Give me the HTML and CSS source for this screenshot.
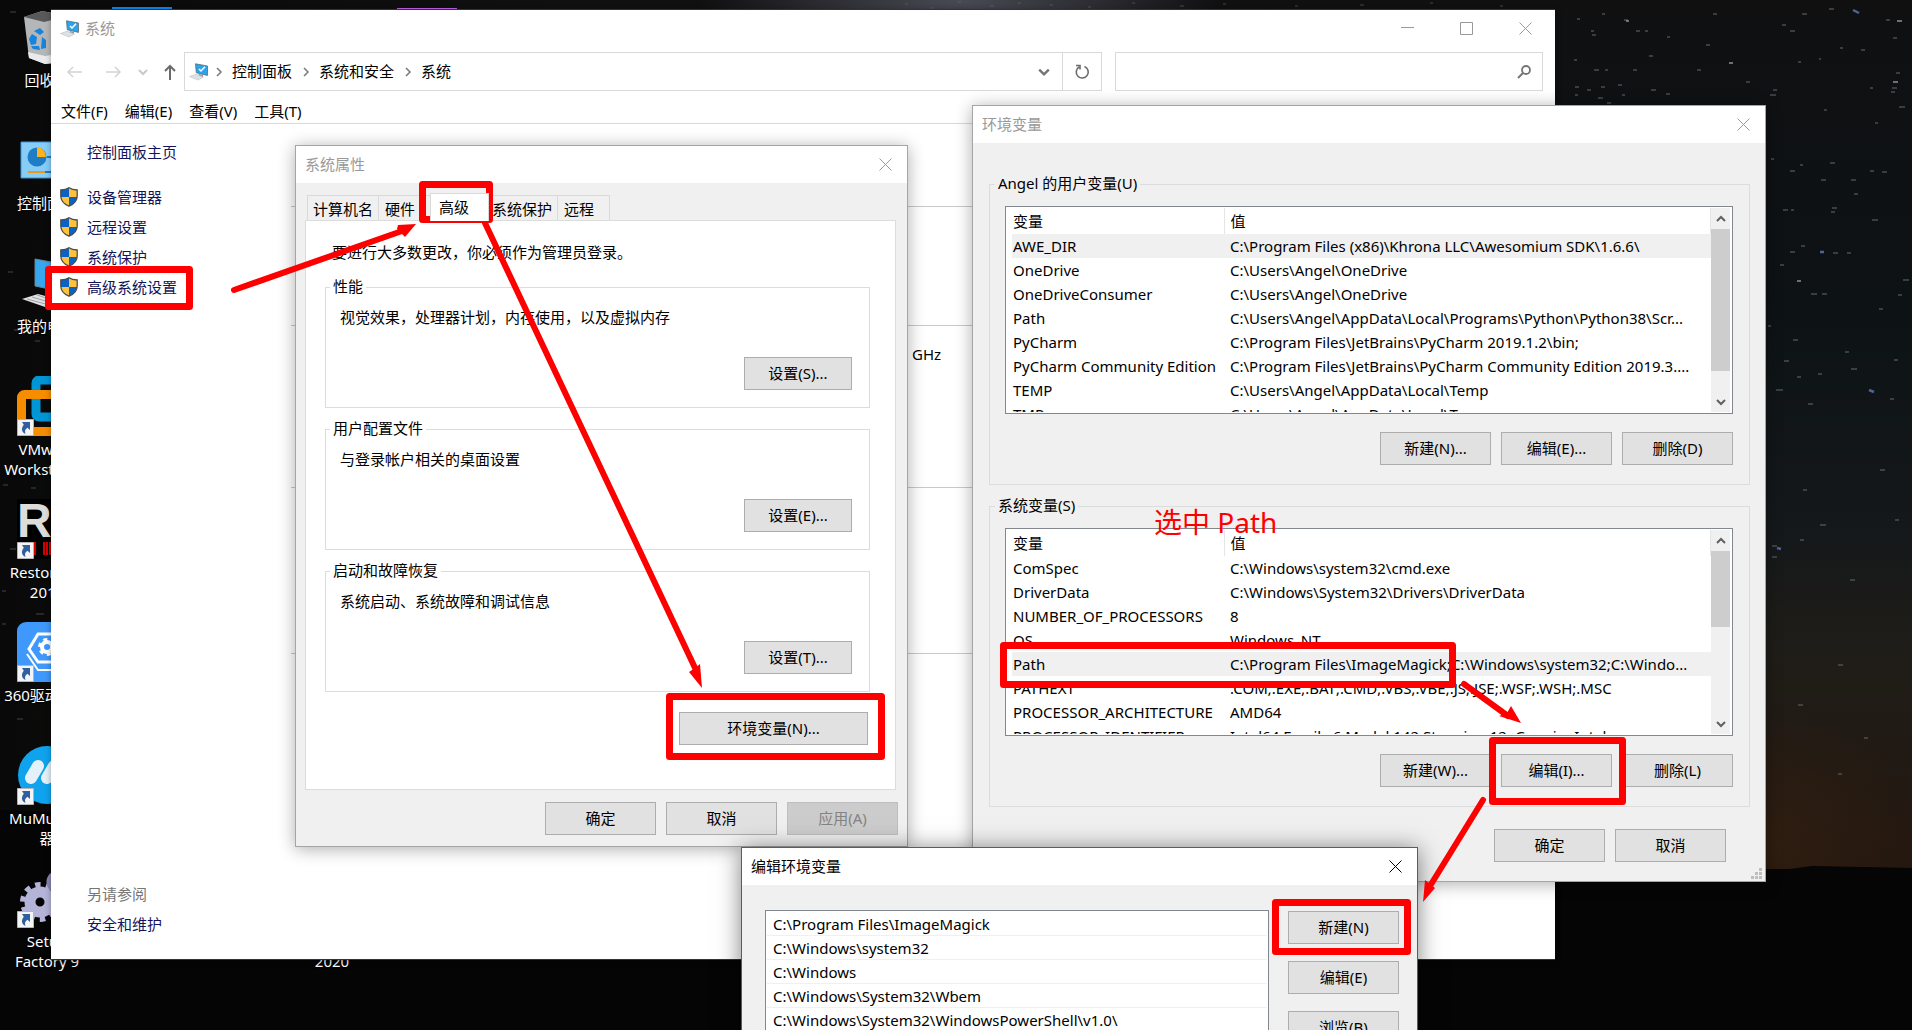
FILE: index.html
```html
<!DOCTYPE html>
<html lang="zh-CN">
<head>
<meta charset="utf-8">
<title>环境变量</title>
<link rel="stylesheet" href="styles.css">
</head>
<body>
<svg class="defs" width="0" height="0" aria-hidden="true">
  <symbol id="shield" viewBox="0 0 18 20">
    <path d="M9 .8C6.500 2.600 3.500 3 .8 3v6c0 5 3 8 8.200 10.200C14.200 17 17.200 14 17.200 9V3C14.500 3 11.500 2.600 9 .8z" fill="#fdc13b"/>
    <path d="M9 .8C6.500 2.600 3.500 3 .8 3v7H9zM9 10h8.100C16.700 14.500 14 17 9 19.200z" fill="#0a63c4"/>
    <path d="M9 .8C6.500 2.600 3.500 3 .8 3v6c0 5 3 8 8.200 10.200C14.200 17 17.200 14 17.200 9V3C14.500 3 11.500 2.600 9 .8z" fill="none" stroke="#4d4d4d" stroke-width="1.300"/>
  </symbol>
  <symbol id="pc" viewBox="0 0 20 18">
    <path d="M6.500.8l12 2.200v9.400L7.300 9.800z" fill="#2ba4ee" stroke="#5b6b76" stroke-width=".8"/>
    <path d="M10 6l2 2 4-4.200" fill="none" stroke="#fff" stroke-width="1.500"/>
    <path d="M10 11l4 1v2l-5-.5z" fill="#8a959c"/>
    <path d="M.5 13.500L7 11.300l7.500 2.700-5.500 3z" fill="#dfe2e4" stroke="#b9bfc3" stroke-width=".6"/>
  </symbol>
  <symbol id="shortcut" viewBox="0 0 17 17">
    <path d="M.5.5h16v16H.5z" fill="#f4f4f4" stroke="#b5b5b5"/>
    <path d="M5 3h8v8l-2.500-2.200C8 10.500 7.500 12 8.500 15 5 13.500 3.500 10 6.800 5.800z" fill="#2f5f9f"/>
  </symbol>
  <symbol id="close" viewBox="0 0 13 13"><path d="M.5.5l12 12M12.500.5l-12 12" fill="none" stroke="currentColor"/></symbol>
  <symbol id="right" viewBox="0 0 8 10"><path d="M2 1l4 4-4 4" fill="none" stroke="currentColor" stroke-width="1.500"/></symbol>
  <symbol id="down" viewBox="0 0 10 8"><path d="M1 2l4 4 4-4" fill="none" stroke="currentColor" stroke-width="2"/></symbol>
  <symbol id="up" viewBox="0 0 10 8"><path d="M1 6l4-4 4 4" fill="none" stroke="currentColor" stroke-width="2"/></symbol>
</svg>

<main class="desktop">
  <svg class="sky" viewBox="0 0 1912 1030" preserveAspectRatio="none" aria-hidden="true">
    <defs>
      <linearGradient id="night" x1="0" y1="0" x2="0" y2="1"><stop offset="0" stop-color="#101011"/><stop offset=".35" stop-color="#0d1215"/><stop offset=".6" stop-color="#14181a"/><stop offset=".75" stop-color="#1f1d18"/><stop offset="1" stop-color="#24170f"/></linearGradient>
      <linearGradient id="shade" x1="0" x2="1"><stop offset="0" stop-color="#090909"/><stop offset=".3" stop-color="#090909" stop-opacity="0"/></linearGradient>
      <radialGradient id="glow"><stop offset="0" stop-color="#3a2210" stop-opacity=".5"/><stop offset="1" stop-color="#3a2210" stop-opacity="0"/></radialGradient>
      <radialGradient id="milky"><stop offset="0" stop-color="#4a4a55"/><stop offset="1" stop-color="#4a4a55" stop-opacity="0"/></radialGradient>
    </defs>
    <path d="M0 0h1912v870H0z" fill="url(#night)"/>
    <path d="M0 0h1912v870H0z" fill="url(#shade)"/>
    <ellipse cx="960" cy="0" rx="260" ry="60" fill="url(#milky)"/>
    <ellipse cx="1770" cy="840" rx="150" ry="130" fill="url(#glow)"/>
    <path d="M0 810l60 2 1700 57 30 0 22-3 50 1 50 1v162H0z" fill="#050505"/>
    <g fill="none" stroke="#646b70" stroke-width="1">
      <path d="M1624 20h4M1577 19h3M1602 14h3M1713 14h4M1636 31h4M1645 31h3M1591 31h3M1592 35h4M1667 37h3M1706 45h4M1574 60h3M1649 56h4M1594 70h5M1633 70h4M1605 70h3M1575 87h4M1587 90h4M1601 87h4M1618 85h4M1651 90h5M1666 94h4M1622 95h3M1598 98h5M1607 103h4M1575 95h3M1697 70h4M1746 82h4M1773 90h4M1770 95h6M1802 14h5M1829 9h5M1782 25h4M1790 31h5M1840 48h3M1886 20h4M1893 38h4M1798 62h3M1819 59h2M1861 50h4M1896 73h4M1892 88h5M1870 88h3M1891 92h4M1899 107h6M1824 110h3M1875 123h3"/>
      <path d="M1771 159h3M1830 163h5M1800 165h3M1790 171h5M1821 180h5M1851 180h5M1882 172h5M1870 171h4M1854 194h4M1783 210h5M1791 210h3M1832 208h5M1831 212h4M1872 220h6M1790 252h5M1801 246h4M1820 252h4M1833 253h5M1847 253h4M1780 265h4M1811 294h6M1822 294h5M1903 280h6M1898 295h4M1879 309h4M1768 326h3M1793 340h5M1784 361h5M1845 352h4M1851 369h6M1797 377h4M1818 374h4M1894 360h4M1776 390h7M1808 404h5M1890 399h4M1772 546h5M1800 540h4M1772 557h5M1820 525h6M1850 580h5M1798 705h5M1838 665h5M1864 738h4M1803 490h4M1880 470h5M1895 520h4M1838 774h4"/>
      <path d="M905 4h3M931 8h3M958 2h3M990 6h4M1018 3h3M1050 5h3M1088 7h3M1132 3h3M1180 6h4M1223 4h3M1295 6h3M1360 5h4M1430 3h3M1500 6h3M10 12h6M22 175h4M8 272h5M14 330h6M35 341h5M3 485h5M31 488h5M10 549h6M2 591h4M36 614h8M2 624h4M17 719h6" opacity=".6"/>
    </g>
    <path d="M1897 21h5M1626 21h3M1729 63h4M1893 82h5M1797 281h4" stroke="#8b9095" stroke-width="1.500"/>
    <path d="M1853 10l6 3M1869 390l5 2M1777 548l4 1M1820 252h4" stroke="#50629c" stroke-width="2.500"/>
  </svg>

  <section class="icons" aria-label="桌面图标">
    <div class="shortcut r1"><svg class="app" viewBox="0 0 60 60"><path d="M7 10L25 4l26 5-5 46-18 2-16-6z" fill="#b4b6b8"/><path d="M7 10L25 4l26 5-24 6z" fill="#57595b"/><path d="M11 45l17 4 18-3-1 9-17 2-16-6z" fill="#e9eaeb"/><path d="M17 24l6-3 4 4-4 3zM12 32l3-5 5 3-1 7-5 1zM25 30l4 3 0 8-5 1zM14 39l8 0 1 4-7-1z" fill="#1684dc"/></svg><span>回收站</span></div>
    <div class="shortcut r2"><svg class="app" viewBox="0 0 60 60"><path d="M4 12h52v36H4z" fill="#86cdf7" stroke="#3a98d8"/><circle cx="20" cy="27" r="9.500" fill="#1e7dc4"/><path d="M20 27V17a10 10 0 0 1 9 10z" fill="#ffb31a"/><path d="M11 42h17" stroke="#e79a1b" stroke-width="2"/><path d="M28 42h20M30 27h10" stroke="#1e7dc4" stroke-width="2"/></svg><span>控制面板</span></div>
    <div class="shortcut r3"><svg class="app" viewBox="0 0 60 60"><path d="M18 6l38 7v28l-38-8z" fill="#36a6ee" stroke="#70808c"/><path d="M5 46l16-5 22 6-12 8z" fill="#dfe2e4"/><path d="M10 46l22 6M15 44l20 6M20 42l18 6" stroke="#9aa1a6"/></svg><span>我的电脑</span></div>
    <div class="shortcut r4"><svg class="app" viewBox="0 0 60 60"><rect x="19" y="4" width="37" height="37" rx="3" fill="none" stroke="#0095d5" stroke-width="9"/><rect x="4.500" y="18.500" width="38" height="37" rx="3" fill="none" stroke="#f68d00" stroke-width="9"/></svg><svg class="badge"><use href="#shortcut"/></svg><span>VMware Workstation</span></div>
    <div class="shortcut r5"><span class="app restorator">Res</span><svg class="bars" viewBox="0 0 60 13"><path d="M0 0h60v13H0z" fill="#000"/><path d="M18 0v13M27 0v13M30 0v13M33 0v13" stroke="#d40000" stroke-width="2"/></svg><svg class="badge"><use href="#shortcut"/></svg><span>Restorator 2018</span></div>
    <div class="shortcut r6"><svg class="app" viewBox="0 0 60 60"><rect width="60" height="60" rx="9" fill="#3f98fb"/><path d="M21 12h20l9 15-9 13H21l-9-13z" fill="none" stroke="#fff" stroke-width="3"/><path d="M10 32l11 16h20" fill="none" stroke="#fff" stroke-width="2"/><circle cx="30" cy="25" r="5" fill="none" stroke="#fff" stroke-width="4"/><circle cx="30" cy="25" r="7.500" fill="none" stroke="#fff" stroke-width="3" stroke-dasharray="4 3.850"/></svg><svg class="badge"><use href="#shortcut"/></svg><span>360驱动大师</span></div>
    <div class="shortcut r7"><svg class="app" viewBox="0 0 60 60"><circle cx="30" cy="30" r="29" fill="#0fa3ee"/><path d="M14 33l7-12M30 33l7-12" stroke="#e4f1f8" stroke-width="12" stroke-linecap="round"/></svg><svg class="badge"><use href="#shortcut"/></svg><span>MuMu模拟器</span></div>
    <div class="shortcut r8"><svg class="app" viewBox="0 0 60 60"><circle cx="23" cy="34" r="10" fill="none" stroke="#b4b3d8" stroke-width="11"/><circle cx="23" cy="34" r="17.500" fill="none" stroke="#b4b3d8" stroke-width="5" stroke-dasharray="5.500 5.500"/><circle cx="41" cy="14" r="8" fill="none" stroke="#8886b4" stroke-width="7"/></svg><svg class="badge"><use href="#shortcut"/></svg><span>Setup Factory 9</span></div>
    <div class="shortcut blue"><span class="app tile"></span></div>
    <div class="shortcut year"><span class="app"></span><span>2020</span></div>
    <div class="shortcut purple"><span class="app tile"></span></div>
  </section>

  <section class="window system">
    <header class="titlebar">
      <svg class="pc"><use href="#pc"/></svg>
      <h1 class="title">系统</h1>
      <div class="controls">
        <button aria-label="最小化"><svg viewBox="0 0 13 13"><path d="M0 5.500h13" stroke="currentColor"/></svg></button>
        <button aria-label="最大化"><svg viewBox="0 0 13 13"><path d="M.5.5h12v12H.5z" fill="none" stroke="currentColor"/></svg></button>
        <button aria-label="关闭"><svg><use href="#close"/></svg></button>
      </div>
    </header>
    <nav class="navbar" aria-label="导航">
      <div class="history">
        <button aria-label="后退" disabled><svg width="16" height="12" viewBox="0 0 16 12"><path d="M15 6H1M6 1L1 6l5 5" fill="none" stroke="#d3d3d3" stroke-width="1.500"/></svg></button>
        <button aria-label="前进" disabled><svg width="16" height="12" viewBox="0 0 16 12"><path d="M0 6h14M9 1l5 5-5 5" fill="none" stroke="#d3d3d3" stroke-width="1.500"/></svg></button>
        <button class="recent" aria-label="最近位置" disabled><svg width="10" height="8"><use href="#down"/></svg></button>
        <button aria-label="上移"><svg width="12" height="16" viewBox="0 0 12 16"><path d="M6 16V2M1 7l5-5 5 5" fill="none" stroke="#6b6b6b" stroke-width="2"/></svg></button>
      </div>
      <div class="address">
        <svg class="pc"><use href="#pc"/></svg>
        <svg class="crumb"><use href="#right"/></svg><a href="#panel">控制面板</a>
        <svg class="crumb"><use href="#right"/></svg><a href="#security">系统和安全</a>
        <svg class="crumb"><use href="#right"/></svg><a href="#system">系统</a>
        <button class="expand" aria-label="展开"><svg width="12" height="10" viewBox="0 0 10 8"><use href="#down"/></svg></button>
        <button class="refresh" aria-label="刷新"><svg width="16" height="16" viewBox="0 0 16 16"><path d="M10.500 2.500A6 6 0 1 1 5 3M2 1.500h4v4" fill="none" stroke="currentColor" stroke-width="1.600"/></svg></button>
      </div>
      <div class="search">
        <input type="text" aria-label="搜索">
        <svg width="14" height="14" viewBox="0 0 14 14"><circle cx="9" cy="5" r="4" fill="none" stroke="#757575" stroke-width="1.800"/><path d="M6 8l-5 5" stroke="#757575" stroke-width="2"/></svg>
      </div>
    </nav>
    <div class="menubar">
      <button>文件(F)</button><button>编辑(E)</button><button>查看(V)</button><button>工具(T)</button>
    </div>
    <div class="content">
      <aside class="sidebar">
        <a class="home" href="#home">控制面板主页</a>
        <a href="#device"><svg><use href="#shield"/></svg>设备管理器</a>
        <a href="#remote"><svg><use href="#shield"/></svg>远程设置</a>
        <a href="#protect"><svg><use href="#shield"/></svg>系统保护</a>
        <a href="#advanced"><svg><use href="#shield"/></svg>高级系统设置</a>
        <p>另请参阅</p>
        <a class="plain" href="#maintenance">安全和维护</a>
      </aside>
      <div class="details">
        <section class="edition"></section>
        <section class="hardware"><span>GHz</span></section>
        <section class="network"></section>
        <section></section>
      </div>
    </div>
  </section>

  <section class="window properties">
    <header class="titlebar"><h2 class="title">系统属性</h2><div class="controls"><button aria-label="关闭"><svg><use href="#close"/></svg></button></div></header>
    <div class="tabs" role="tablist">
      <button role="tab" class="t-name">计算机名</button><button role="tab" class="t-hw">硬件</button><button role="tab" class="t-adv" aria-selected="true">高级</button><button role="tab" class="t-name">系统保护</button><button role="tab" class="t-remote">远程</button>
    </div>
    <div class="panel">
      <p class="note">要进行大多数更改，你必须作为管理员登录。</p>
      <fieldset><legend>性能</legend><p>视觉效果，处理器计划，内存使用，以及虚拟内存</p><button class="btn">设置(S)...</button></fieldset>
      <fieldset><legend>用户配置文件</legend><p>与登录帐户相关的桌面设置</p><button class="btn">设置(E)...</button></fieldset>
      <fieldset><legend>启动和故障恢复</legend><p>系统启动、系统故障和调试信息</p><button class="btn">设置(T)...</button></fieldset>
      <button class="btn wide">环境变量(N)...</button>
    </div>
    <footer class="actions"><button class="btn">确定</button><button class="btn">取消</button><button class="btn" disabled>应用(A)</button></footer>
  </section>

  <section class="window environment">
    <header class="titlebar"><h2 class="title">环境变量</h2><div class="controls"><button aria-label="关闭"><svg><use href="#close"/></svg></button></div></header>
    <fieldset>
      <legend>Angel 的用户变量(U)</legend>
      <div class="listbox">
        <div class="rows">
          <table>
            <thead><tr><th class="name">变量</th><th>值</th></tr></thead>
            <tbody>
              <tr class="selected"><td>AWE_DIR</td><td>C:\Program Files (x86)\Khrona LLC\Awesomium SDK\1.6.6\</td></tr>
              <tr><td>OneDrive</td><td>C:\Users\Angel\OneDrive</td></tr>
              <tr><td>OneDriveConsumer</td><td>C:\Users\Angel\OneDrive</td></tr>
              <tr><td>Path</td><td>C:\Users\Angel\AppData\Local\Programs\Python\Python38\Scr...</td></tr>
              <tr><td>PyCharm</td><td>C:\Program Files\JetBrains\PyCharm 2019.1.2\bin;</td></tr>
              <tr><td>PyCharm Community Edition</td><td>C:\Program Files\JetBrains\PyCharm Community Edition 2019.3....</td></tr>
              <tr><td>TEMP</td><td>C:\Users\Angel\AppData\Local\Temp</td></tr>
              <tr><td>TMP</td><td>C:\Users\Angel\AppData\Local\Temp</td></tr>
            </tbody>
          </table>
        </div>
        <div class="scrollbar"><svg><use href="#up"/></svg><i class="thumb long"></i><svg><use href="#down"/></svg></div>
      </div>
      <div class="buttons"><button class="btn">新建(N)...</button><button class="btn">编辑(E)...</button><button class="btn">删除(D)</button></div>
    </fieldset>
    <fieldset>
      <legend>系统变量(S)</legend>
      <div class="listbox">
        <div class="rows">
          <table>
            <thead><tr><th class="name">变量</th><th>值</th></tr></thead>
            <tbody>
              <tr><td>ComSpec</td><td>C:\Windows\system32\cmd.exe</td></tr>
              <tr><td>DriverData</td><td>C:\Windows\System32\Drivers\DriverData</td></tr>
              <tr><td>NUMBER_OF_PROCESSORS</td><td>8</td></tr>
              <tr><td>OS</td><td>Windows_NT</td></tr>
              <tr class="selected"><td>Path</td><td>C:\Program Files\ImageMagick;C:\Windows\system32;C:\Windo...</td></tr>
              <tr><td>PATHEXT</td><td>.COM;.EXE;.BAT;.CMD;.VBS;.VBE;.JS;.JSE;.WSF;.WSH;.MSC</td></tr>
              <tr><td>PROCESSOR_ARCHITECTURE</td><td>AMD64</td></tr>
              <tr><td>PROCESSOR_IDENTIFIER</td><td>Intel64 Family 6 Model 142 Stepping 12, GenuineIntel</td></tr>
            </tbody>
          </table>
        </div>
        <div class="scrollbar"><svg><use href="#up"/></svg><i class="thumb short"></i><svg><use href="#down"/></svg></div>
      </div>
      <div class="buttons"><button class="btn">新建(W)...</button><button class="btn">编辑(I)...</button><button class="btn">删除(L)</button></div>
    </fieldset>
    <footer class="actions"><button class="btn">确定</button><button class="btn">取消</button></footer>
    <svg class="grip" width="11" height="11" viewBox="0 0 11 11"><path d="M8 0h3v3H8zM4 4h3v3H4zM8 4h3v3H8zM0 8h3v3H0zM4 8h3v3H4zM8 8h3v3H8z" fill="#bfbfbf"/></svg>
  </section>

  <section class="window editor">
    <header class="titlebar"><h2 class="title">编辑环境变量</h2><div class="controls"><button aria-label="关闭"><svg><use href="#close"/></svg></button></div></header>
    <div class="editor-body">
      <ul class="paths">
        <li>C:\Program Files\ImageMagick</li>
        <li>C:\Windows\system32</li>
        <li>C:\Windows</li>
        <li>C:\Windows\System32\Wbem</li>
        <li>C:\Windows\System32\WindowsPowerShell\v1.0\</li>
      </ul>
      <div class="side-buttons"><button class="btn">新建(N)</button><button class="btn">编辑(E)</button><button class="btn">浏览(B)</button></div>
    </div>
  </section>

  <svg class="marks" width="1912" height="1030" viewBox="0 0 1912 1030" aria-hidden="true">
    <g fill="none" stroke="#fe0000" stroke-width="7" stroke-linejoin="round">
      <rect x="48.500" y="269.500" width="141" height="37"/>
      <rect x="422.500" y="184.500" width="67" height="35"/>
      <rect x="669.500" y="696.500" width="212" height="60"/>
      <rect x="1003.500" y="645.500" width="449" height="39"/>
      <rect x="1492.500" y="740.500" width="130" height="61"/>
      <rect x="1275.500" y="902.500" width="132" height="49"/>
      <path d="M234 290L402 231M485 223L696 670M1464 684L1508 716M1483 800L1430 886" stroke-width="6" stroke-linecap="round"/>
    </g>
    <path d="M416 224l-18 1-1 4 8 8zM702 688l-2-24-5 4-6 4zM1521 723l-10-17-4 7-8 3zM1423 902l2-22 4 3 6 5z" fill="#fe0000"/>
  </svg>
  <p class="caption">选中 Path</p>
</main>
</body>
</html>
```
FILE: styles.css
```css
* { box-sizing: border-box; }

body {
  margin: 0;
  background: #050505;
  color: #000;
  font: 15px/20px "Noto Sans", "Noto Sans CJK SC", sans-serif;
}

button, input { font: inherit; color: inherit; }
button { padding: 0; border: 0; background: none; white-space: nowrap; }
h1, h2, p, ul { margin: 0; padding: 0; font-size: 15px; font-weight: 400; }
a { color: inherit; text-decoration: none; }
svg { display: block; flex: none; }
.defs { position: absolute; }

.desktop { position: relative; height: 100vh; overflow: hidden; }
.sky { position: absolute; inset: 0; width: 100%; height: 100%; }

/* Desktop icons */
.icons {
  position: relative;
  display: grid;
  grid-template-columns: repeat(5, 95px);
  grid-template-rows: repeat(8, 123px);
  padding-top: 7px;
}
.shortcut {
  grid-column: 1;
  position: relative;
  display: flex;
  flex-direction: column;
  align-items: center;
  gap: 3px;
  width: 94px;
  color: #fff;
  text-align: center;
  text-shadow: 1px 1px 2px #000;
}
.app { display: block; width: 60px; height: 60px; flex: none; }
.badge { position: absolute; left: 17px; top: 43px; width: 17px; height: 17px; }
.bars { position: absolute; left: 17px; top: 43px; width: 60px; height: 13px; }
.restorator {
  overflow: hidden;
  background: #000;
  color: #dcdcdc;
  font: bold 48px/44px "Liberation Sans Narrow", "Liberation Sans", sans-serif;
  text-align: left;
}
.r1 { grid-row: 1; } .r2 { grid-row: 2; } .r3 { grid-row: 3; } .r4 { grid-row: 4; }
.r5 { grid-row: 5; } .r6 { grid-row: 6; } .r7 { grid-row: 7; } .r8 { grid-row: 8; }
.r7 span { width: 78px; }
.r8 span { width: 70px; }
.blue { grid-area: 1 / 2; }
.purple { grid-area: 1 / 5; }
.blue .tile { background: #0b84f0; }
.purple .tile { margin-top: 1px; background: #c060ec; }
.year { grid-area: 8 / 4; }
.year span:last-child { padding-top: 20px; }

/* Windows */
.window {
  position: absolute;
  border: 1px solid #a5a5a5;
  background: #f0f0f0;
  box-shadow: 0 2px 16px rgba(0, 0, 0, .32);
}
.titlebar { display: flex; align-items: center; height: 37px; padding-left: 9px; background: #fff; color: #999; }
.title { flex: 1; padding-bottom: 2px; }
.controls { display: flex; }
.controls button { display: flex; width: 59px; height: 37px; align-items: center; justify-content: center; }
.controls svg { width: 13px; height: 13px; }
.window:not(.system) .controls button { width: 43px; }
.btn { width: 111px; height: 33px; padding-bottom: 2px; border: 1px solid #adadad; background: #e1e1e1; }
.btn:disabled { border-color: #bfbfbf; background: #ccc; color: #838383; }
fieldset { margin: 0; padding: 0; border: 1px solid #dcdcdc; min-width: 0; }
legend { padding: 0 3px 1px; line-height: 19px; }
.actions { display: flex; justify-content: flex-end; gap: 10px; }

/* System window */
.system { left: 51px; top: 9px; width: 1504px; border-color: #333; border-width: 1px 0; background: #fff; box-shadow: 0 2px 6px rgba(0, 0, 0, .32); }
.pc { width: 20px; height: 18px; }
.system .pc { margin-right: 5px; }
.navbar { display: flex; align-items: center; gap: 13px; padding: 5px 12px 0 16px; }
.history { display: flex; align-items: center; gap: 16px; width: 104px; }
.history button:nth-child(2) { margin-left: 7px; }
.recent { color: #c9c9c9; }
.recent svg { width: 10px; }
.address { display: flex; flex: 1; align-items: center; height: 39px; border: 1px solid #d9d9d9; padding-left: 4px; }
.system .address .pc { margin-right: -4px; }
.address a { padding-bottom: 1px; }
.crumb { width: 8px; height: 10px; margin: 0 9px 0 10px; color: #777; }
.expand { display: flex; margin-left: auto; margin-right: 12px; color: #757575; }
.refresh { display: flex; width: 39px; height: 37px; align-items: center; justify-content: center; border-left: 1px solid #d9d9d9; color: #6b6b6b; }
.search { display: flex; align-items: center; width: 428px; height: 39px; padding-right: 11px; border: 1px solid #d9d9d9; }
.search input { flex: 1; min-width: 0; height: 30px; border: 0; background: none; }
.menubar { display: flex; gap: 17px; padding: 10px 10px 2px; border-bottom: 1px solid #d9d9d9; }
.content { display: flex; height: 835px; }
.sidebar { display: flex; flex-direction: column; width: 240px; padding: 18px 0 25px 9px; color: #14145a; }
.sidebar a { display: flex; align-items: center; gap: 9px; height: 30px; }
.sidebar svg { width: 18px; height: 20px; }
.sidebar .home { height: 20px; margin: 0 0 20px 27px; }
.sidebar p { margin: auto 0 5px 27px; color: #767676; }
.sidebar .plain { height: 20px; margin: 5px 0 0 27px; }
.details { flex: 1; padding-top: 82px; }
.details section { border-top: 1px solid #c9c9c9; }
.edition { height: 119px; }
.hardware { height: 162px; padding: 18px 0 0 621px; }
.network { height: 166px; }

/* System properties dialog */
.properties { left: 295px; top: 145px; width: 613px; padding-bottom: 11px; }
.tabs { display: flex; align-items: flex-end; height: 37px; padding-left: 11px; }
.tabs button { height: 25px; padding: 1px 0 0 6px; border: 1px solid #d9d9d9; border-width: 1px 1px 0 0; text-align: left; }
.tabs .t-name { width: 72px; }
.tabs .t-name:first-child { padding-left: 5px; border-left-width: 1px; }
.tabs .t-hw { width: 54px; }
.tabs .t-remote { width: 52px; }
.tabs .t-adv { width: 59px; height: 28px; margin: 0 -3px -1px; padding: 0 0 2px 8px; border-left-width: 1px; background: #fff; z-index: 1; }
.panel { display: flex; flex-direction: column; gap: 11px; height: 570px; margin: 0 11px 12px 9px; padding: 21px 25px 0 19px; border: 1px solid #dcdcdc; background: #fff; }
.panel .note { margin: 0 0 4px 7px; }
.panel fieldset { padding: 10px 17px 17px 14px; }
.panel legend { margin-left: -10px; }
.panel fieldset .btn { display: block; width: 108px; margin: 30px 0 0 auto; }
.panel .wide { width: 189px; margin: 9px 2px 0 auto; }
.properties .actions { padding-right: 9px; }

/* Environment variables dialog */
.environment { left: 972px; top: 105px; width: 794px; padding-bottom: 19px; }
.environment fieldset { margin: 0 15px 11px 16px; padding: 12px 16px 19px 15px; }
.environment legend { margin-left: -10px; }
.environment .titlebar { margin-bottom: 31px; }
.listbox { display: flex; height: 208px; padding: 1px 2px 1px 6px; border: 1px solid #828790; background: #fff; }
.rows { flex: 1; min-width: 0; overflow: hidden; }
table { width: 100%; border-collapse: collapse; table-layout: fixed; }
th, td { height: 24px; padding: 0 0 1px 1px; font-weight: 400; text-align: left; white-space: nowrap; }
th { height: 26px; border-right: 1px solid #e5e5e5; }
.name { width: 212px; }
th + th, td + td { padding-left: 6px; }
.selected { background: #f0f0f0; }
.scrollbar { display: flex; flex-direction: column; align-items: center; width: 19px; background: #f0f0f0; color: #606060; }
.scrollbar svg { width: 10px; height: 8px; margin: 7px 0 6px; }
.scrollbar svg:last-child { margin-top: auto; }
.thumb { width: 19px; background: #cdcdcd; }
.long { height: 142px; }
.short { height: 76px; }
.buttons { display: flex; justify-content: flex-end; gap: 10px; margin-top: 18px; }
.environment .actions { margin-top: 22px; padding-right: 39px; }
.grip { position: absolute; right: 3px; bottom: 2px; }

/* Edit dialog */
.editor { left: 741px; top: 847px; width: 677px; border-color: #5c5c5c; box-shadow: 0 2px 22px rgba(0, 0, 0, .5); }
.editor .titlebar { color: #000; }
.editor-body { display: flex; gap: 19px; padding: 25px 18px 80px 23px; }
.paths { flex: 1; min-height: 400px; padding: 1px; border: 1px solid #828790; background: #fff; list-style: none; }
.paths li { height: 24px; padding: 2px 0 0 6px; border-bottom: 1px solid #f0f0f0; }
.side-buttons { display: flex; flex-direction: column; gap: 17px; padding-top: 1px; }

/* Tutorial annotations */
.marks { position: absolute; left: 0; top: 0; }
.caption { position: absolute; left: 1154px; top: 502px; color: #fe0000; font-size: 28px; line-height: 40px; }
```
